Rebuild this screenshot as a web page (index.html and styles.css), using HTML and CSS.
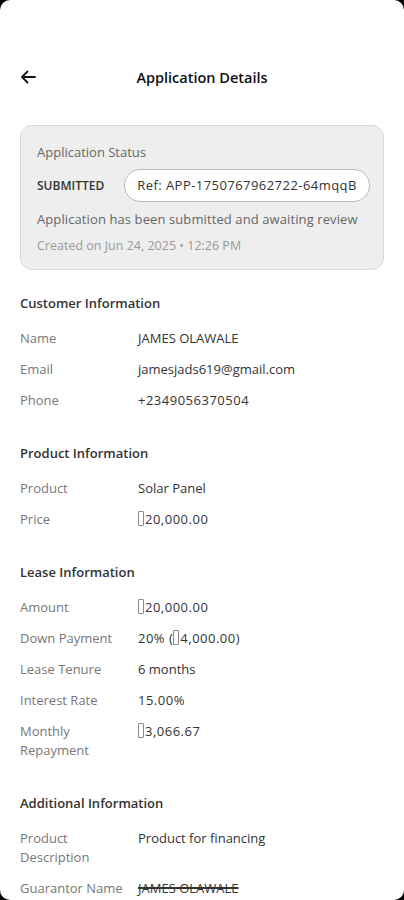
FILE: index.html
```html
<!DOCTYPE html>
<html lang="en">
<head>
  <meta charset="UTF-8">
  <title>Application Details</title>
  <link rel="stylesheet" href="styles.css">
</head>
<body>
  <div class="screen">
    <div class="topbar">
      <button class="back" aria-label="Back">
        <svg width="16" height="14" viewBox="0 0 16 14"><path d="M15 7H2M7.5 1.5L2 7l5.5 5.5" fill="none" stroke="#111" stroke-width="1.8" stroke-linecap="round" stroke-linejoin="round"/></svg>
      </button>
      <h1>Application Details</h1>
    </div>

    <!-- status card -->
    <div class="status-card">
      <div class="status-label">Application Status</div>
      <div class="status-row">
        <span class="status">SUBMITTED</span>
        <span class="ref">Ref: APP-1750767962722-64mqqB</span>
      </div>
      <div class="status-msg">Application has been submitted and awaiting review</div>
      <div class="status-date">Created on Jun 24, 2025 • 12:26 PM</div>
    </div>

    <div class="section">
      <h3>Customer Information</h3>
      <div class="row"><span class="label">Name</span><span class="value">JAMES OLAWALE</span></div>
      <div class="row"><span class="label">Email</span><span class="value">jamesjads619@gmail.com</span></div>
      <div class="row"><span class="label">Phone</span><span class="value num">+2349056370504</span></div>
    </div>

    <div class="section">
      <h3>Product Information</h3>
      <div class="row"><span class="label">Product</span><span class="value">Solar Panel</span></div>
      <div class="row"><span class="label">Price</span><span class="value num"><i class="tofu"></i>20,000.00</span></div>
    </div>

    <div class="section">
      <h3>Lease Information</h3>
      <div class="row"><span class="label">Amount</span><span class="value num"><i class="tofu"></i>20,000.00</span></div>
      <div class="row"><span class="label">Down Payment</span><span class="value num">20% (<i class="tofu"></i>4,000.00)</span></div>
      <div class="row"><span class="label">Lease Tenure</span><span class="value">6 months</span></div>
      <div class="row"><span class="label">Interest Rate</span><span class="value num">15.00%</span></div>
      <div class="row"><span class="label">Monthly Repayment</span><span class="value num"><i class="tofu"></i>3,066.67</span></div>
    </div>

    <div class="section">
      <h3>Additional Information</h3>
      <div class="row"><span class="label">Product Description</span><span class="value">Product for financing</span></div>
      <div class="row"><span class="label">Guarantor Name</span><span class="value strike">JAMES OLAWALE</span></div>
    </div>
  </div>
</body>
</html>
```

FILE: styles.css
```css
html, body {
  margin: 0;
  height: 900px;
  overflow: hidden;
  background: #000;
}
body {
  font-family: "Open Sans", "Noto Sans", sans-serif;
  color: #222;
}
.screen {
  background: #fff;
  height: 900px;
  border-radius: 10px;
  padding: 0 20px;
  box-sizing: border-box;
  overflow: hidden;
}
.topbar {
  display: flex;
  align-items: center;
  justify-content: center;
  position: relative;
  padding-top: 66px;
  height: 22px;
}
.back {
  position: absolute;
  left: 0;
  top: 70px;
  border: none;
  background: none;
  padding: 0;
  width: 16px;
  height: 14px;
}
.topbar h1 {
  margin: 0;
  font-size: 14.5px;
  font-weight: 600;
  color: #111;
}
.status-card {
  margin-top: 37px;
  background: #eeeeee;
  border: 1px solid #d9d9d9;
  border-radius: 12px;
  padding: 17px 16px 14px 16px;
  height: 145px;
  box-sizing: border-box;
}
.status-label {
  font-size: 13px;
  color: #666;
  line-height: 18px;
}
.status-row {
  display: flex;
  align-items: center;
  gap: 20px;
  margin-top: 8px;
}
.status {
  font-size: 12px;
  font-weight: 600;
  color: #333;
}
.ref {
  background: #fff;
  border: 1px solid #bbb;
  border-radius: 16px;
  padding: 0 12px 0 12px;
  height: 31px;
  line-height: 31px;
  font-size: 13px;
  letter-spacing: 0.45px;
  color: #333;
  white-space: nowrap;
}
.status-msg {
  margin-top: 8px;
  font-size: 13px;
  letter-spacing: 0.1px;
  color: #666;
  line-height: 18px;
}
.status-date {
  margin-top: 9px;
  font-size: 12.5px;
  color: #999;
  line-height: 18px;
}
.section {
  margin-top: 24px;
}
.section + .section {
  margin-top: 28px;
}
.section h3 {
  margin: 0 0 11px 0;
  font-size: 13px;
  font-weight: 600;
  color: #333;
  line-height: 18px;
}
.row {
  display: flex;
  padding: 6px 0;
  font-size: 13px;
  line-height: 19px;
}
.label {
  width: 108px;
  flex: none;
  margin-right: 10px;
  color: #777;
}
.value {
  color: #333;
}
.num {
  letter-spacing: 0.5px;
}
.tofu {
  display: inline-block;
  width: 4px;
  height: 13px;
  border: 1px solid #888;
  border-radius: 1px;
  vertical-align: -2px;
  margin-right: 1px;
}
.strike {
  text-decoration: line-through;
  text-decoration-thickness: 2px;
}
```
